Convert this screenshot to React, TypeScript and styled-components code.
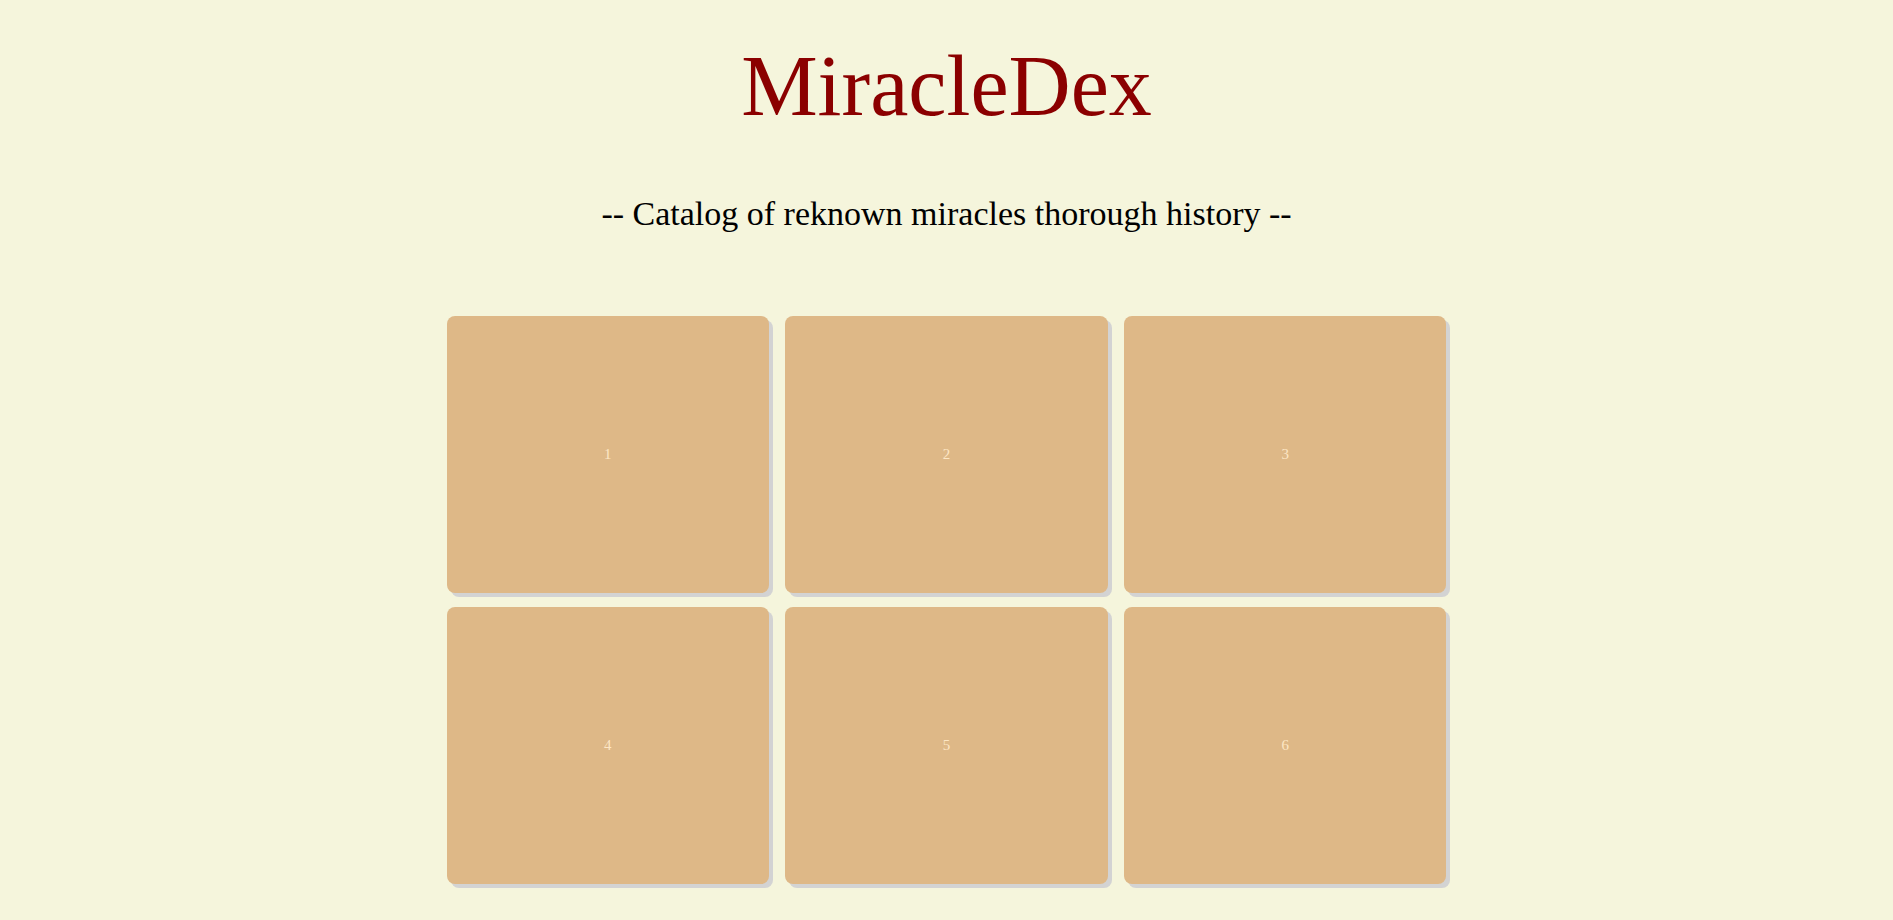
import React from "react";
import styled, { createGlobalStyle } from "styled-components";

const GlobalStyle = createGlobalStyle`
  html, body {
    margin: 0;
    padding: 0;
    background: #f5f5dc;
  }
  body {
    font-family: "Liberation Serif", "Times New Roman", serif;
  }
`;

const Page = styled.main`
  min-height: 920px;
  background: #f5f5dc;
  display: flex;
  flex-direction: column;
  align-items: center;
`;

const Title = styled.h1`
  margin: 32px 0 0;
  font-family: "Liberation Serif", serif;
  font-weight: 400;
  font-size: 86px;
  line-height: 108px;
  color: #8b0000;
`;

const Subtitle = styled.p`
  margin: 54px 0 0;
  font-family: "Liberation Serif", serif;
  font-size: 34px;
  line-height: 40px;
  color: #000;
`;

const Grid = styled.section`
  margin-top: 82px;
  width: 1000px;
  display: grid;
  grid-template-columns: repeat(3, 1fr);
  column-gap: 16px;
  row-gap: 14px;
`;

const Card = styled.div`
  height: 277px;
  background: #deb887;
  border-radius: 8px;
  box-shadow: 4px 4px 0 #d3d3d3;
  display: flex;
  align-items: center;
  justify-content: center;
  font-family: "Liberation Serif", serif;
  font-size: 15px;
  color: #fde6c4;
`;

export default function App() {
  const items = [1, 2, 3, 4, 5, 6];
  return (
    <>
      <GlobalStyle />
      <Page>
        <Title>MiracleDex</Title>
        <Subtitle>-- Catalog of reknown miracles thorough history --</Subtitle>
        <Grid>
          {items.map((n) => (
            <Card key={n}>{n}</Card>
          ))}
        </Grid>
      </Page>
    </>
  );
}
